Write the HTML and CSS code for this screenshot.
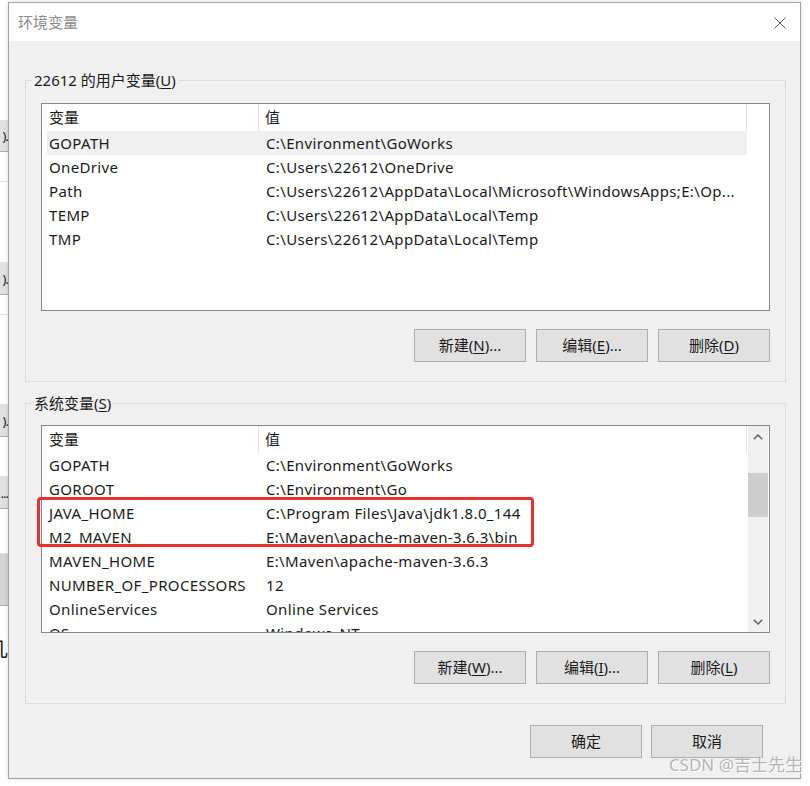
FILE: index.html
```html
<!DOCTYPE html>
<html>
<head>
    <meta charset="UTF-8">
    <title>环境变量</title>
    <link rel="stylesheet" href="styles.css">
</head>
<body>
<div class="screen">
    <!--背后窗口露出的一条-->
    <div class="behind">
        <div class="b-gap" style="height:120px"></div>
        <div class="b-btn">).</div>
        <div class="b-line" style="height:30px"></div>
        <div class="b-line" style="height:81px"></div>
        <div class="b-btn">).</div>
        <div class="b-line" style="height:20px"></div>
        <div class="b-line" style="height:90px"></div>
        <div class="b-btn">).</div>
        <div class="b-line" style="height:40px"></div>
        <div class="b-btn">...</div>
        <div class="b-line" style="height:45px"></div>
        <div class="b-dark"></div>
        <div class="b-char">几</div>
    </div>

    <div class="dialog">
        <div class="titlebar">
            <span class="title">环境变量</span>
            <svg class="close" width="12" height="12" viewBox="0 0 12 12">
                <path d="M0.5 0.5L11.5 11.5M11.5 0.5L0.5 11.5" stroke="#5a5a5a" stroke-width="1" fill="none"/>
            </svg>
        </div>

        <div class="dialog-body">
            <fieldset class="group group-user">
                <legend>22612 的用户变量(<u>U</u>)</legend>
                <div class="list">
                    <div class="list-view">
                        <div class="list-head">
                            <span class="col-name">变量</span>
                            <span class="col-value">值</span>
                        </div>
                        <div class="row selected"><span class="col-name">GOPATH</span><span class="col-value">C:\Environment\GoWorks</span></div>
                        <div class="row"><span class="col-name">OneDrive</span><span class="col-value">C:\Users\22612\OneDrive</span></div>
                        <div class="row"><span class="col-name">Path</span><span class="col-value">C:\Users\22612\AppData\Local\Microsoft\WindowsApps;E:\Op...</span></div>
                        <div class="row"><span class="col-name">TEMP</span><span class="col-value">C:\Users\22612\AppData\Local\Temp</span></div>
                        <div class="row"><span class="col-name">TMP</span><span class="col-value">C:\Users\22612\AppData\Local\Temp</span></div>
                    </div>
                </div>
                <div class="buttons">
                    <div class="btn">新建(<u>N</u>)...</div>
                    <div class="btn">编辑(<u>E</u>)...</div>
                    <div class="btn">删除(<u>D</u>)</div>
                </div>
            </fieldset>

            <fieldset class="group group-system">
                <legend>系统变量(<u>S</u>)</legend>
                <div class="list">
                    <div class="list-view">
                        <div class="list-head">
                            <span class="col-name">变量</span>
                            <span class="col-value">值</span>
                        </div>
                        <div class="row"><span class="col-name">GOPATH</span><span class="col-value">C:\Environment\GoWorks</span></div>
                        <div class="row"><span class="col-name">GOROOT</span><span class="col-value">C:\Environment\Go</span></div>
                        <div class="row"><span class="col-name">JAVA_HOME</span><span class="col-value">C:\Program Files\Java\jdk1.8.0_144</span></div>
                        <div class="row"><span class="col-name">M2_MAVEN</span><span class="col-value">E:\Maven\apache-maven-3.6.3\bin</span></div>
                        <div class="row"><span class="col-name">MAVEN_HOME</span><span class="col-value">E:\Maven\apache-maven-3.6.3</span></div>
                        <div class="row"><span class="col-name">NUMBER_OF_PROCESSORS</span><span class="col-value">12</span></div>
                        <div class="row"><span class="col-name">OnlineServices</span><span class="col-value">Online Services</span></div>
                        <div class="row"><span class="col-name">OS</span><span class="col-value">Windows_NT</span></div>
                    </div>
                    <div class="scrollbar">
                        <div class="arrow">
                            <svg width="10" height="6" viewBox="0 0 10 6"><path d="M0.8 5.2L5 1L9.2 5.2" stroke="#606060" stroke-width="1.5" fill="none"/></svg>
                        </div>
                        <div class="track"><div class="thumb"></div></div>
                        <div class="arrow">
                            <svg width="10" height="6" viewBox="0 0 10 6"><path d="M0.8 0.8L5 5L9.2 0.8" stroke="#606060" stroke-width="1.5" fill="none"/></svg>
                        </div>
                    </div>
                    <!--截图里的红框标注-->
                    <div class="mark"></div>
                </div>
                <div class="buttons">
                    <div class="btn">新建(<u>W</u>)...</div>
                    <div class="btn">编辑(<u>I</u>)...</div>
                    <div class="btn">删除(<u>L</u>)</div>
                </div>
            </fieldset>

            <div class="dialog-buttons">
                <div class="btn">确定</div>
                <div class="btn">取消</div>
            </div>
        </div>
    </div>

    <div class="watermark">CSDN @吉士先生</div>
</div>
</body>
</html>
```

FILE: styles.css
```css
* {
    margin: 0;
    padding: 0;
    box-sizing: border-box;
}

html, body {
    width: 100%;
    height: 100%;
    overflow: hidden;
    background: #fff;
}

body {
    font-family: "Noto Sans", "Noto Sans CJK SC", sans-serif;
    font-size: 15px;
    color: #1a1a1a;
}

u {
    text-decoration: underline;
    text-underline-offset: 2px;
}

.screen {
    position: relative;
    display: flex;
    width: 810px;
    height: 786px;
}

/* 背后窗口 */
.behind {
    display: flex;
    flex-direction: column;
    width: 8px;
    overflow: hidden;
    background: #fff;
}

.b-line {
    border-bottom: 1px solid #e3e3e3;
}

.b-btn {
    display: flex;
    justify-content: flex-end;
    height: 32px;
    line-height: 32px;
    background: #e1e1e1;
    border-bottom: 1px solid #adadad;
    font-size: 13px;
    letter-spacing: -1px;
    white-space: nowrap;
}

.b-dark {
    height: 52px;
    background: #d4d4d4;
    border-bottom: 1px solid #adadad;
}

.b-char {
    display: flex;
    justify-content: flex-end;
    margin-top: 28px;
    font-size: 20px;
    white-space: nowrap;
}

/* 对话框 */
.dialog {
    display: flex;
    flex-direction: column;
    margin-top: 2px;
    width: 793px;
    height: 777px;
    border: 1px solid #a3a3a3;
    background: #f0f0f0;
    box-shadow: 0 0 4px rgba(0, 0, 0, 0.15);
}

.titlebar {
    display: flex;
    align-items: center;
    justify-content: space-between;
    height: 38px;
    padding: 0 14px 2px 9px;
    background: #fff;
}

.title {
    color: #8c8c8c;
    font-size: 15px;
}

.close {
    margin-top: 4px;
}

.dialog-body {
    padding: 0 14px 0 16px;
}

.group {
    border: 1px solid #dcdcdc;
    padding: 13px 15px 19px 15px;
}

.group legend {
    margin-left: -9px;
    padding: 0 2px;
    line-height: 20px;
}

.group-user {
    margin-top: 29px;
}

.group-system {
    margin-top: 11px;
    padding-top: 12px;
}

.list {
    position: relative;
    display: flex;
    height: 208px;
    border: 1px solid #828790;
    background: #fff;
}

.list-view {
    width: 705px;
    overflow: hidden;
}

.list-head {
    display: flex;
    height: 27px;
    line-height: 27px;
}

.list-head span {
    border-right: 1px solid #e5e5e5;
}

.list-head .col-name {
    width: 217px;
    padding-left: 7px;
}

.list-head .col-value {
    width: 488px;
    padding-left: 6px;
}

.row {
    display: flex;
    margin-left: 5px;
    height: 24px;
    line-height: 24px;
    letter-spacing: 0.35px;
    white-space: nowrap;
}

.row.selected {
    background: #f0f0f0;
}

.row .col-name {
    width: 212px;
    padding-left: 2px;
}

.row .col-value {
    width: 488px;
    padding-left: 7px;
}

/* 滚动条 */
.scrollbar {
    display: flex;
    flex-direction: column;
    margin-left: 1px;
    width: 20px;
    background: #f0f0f0;
}

.arrow {
    display: flex;
    align-items: center;
    justify-content: center;
    height: 21px;
}

.track {
    flex: 1;
}

.thumb {
    margin-top: 26px;
    height: 44px;
    background: #cdcdcd;
}

.mark {
    position: absolute;
    left: -5px;
    top: 71px;
    width: 497px;
    height: 50px;
    border: 3px solid #e8302c;
    border-radius: 4px;
}

.buttons {
    display: flex;
    justify-content: flex-end;
    gap: 10px;
    margin-top: 18px;
}

.btn {
    width: 112px;
    height: 33px;
    line-height: 31px;
    text-align: center;
    background: #e1e1e1;
    border: 1px solid #adadad;
    white-space: nowrap;
}

.dialog-buttons {
    display: flex;
    justify-content: flex-end;
    gap: 9px;
    margin-top: 21px;
    padding-right: 23px;
}

.watermark {
    position: absolute;
    right: 8px;
    bottom: 10px;
    font-size: 17px;
    color: #b5b5b5;
    text-shadow: 1px 1px 0 #fff;
}
```
